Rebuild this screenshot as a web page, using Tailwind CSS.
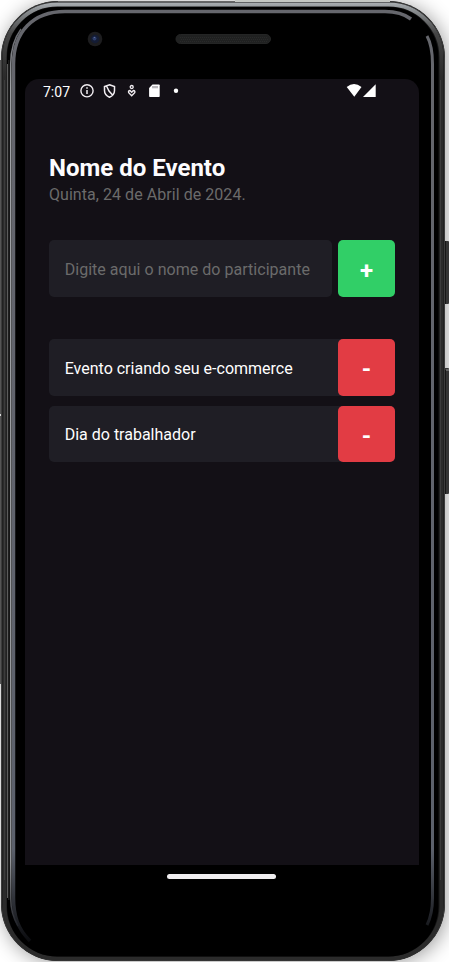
<!DOCTYPE html>
<html lang="pt-BR">
<head>
<meta charset="utf-8">
<title>Nome do Evento</title>
<script src="https://cdn.jsdelivr.net/npm/@tailwindcss/browser@4"></script>
</head>
<body class="relative w-[449px] h-[962px] overflow-hidden bg-white font-['Roboto',sans-serif]">
<!-- device frame -->
<svg class="absolute inset-0" width="449" height="962" viewBox="0 0 449 962" fill="none">
  <defs>
    <linearGradient id="rim" gradientUnits="userSpaceOnUse" x1="0" y1="0" x2="0" y2="962"><stop offset="0" stop-color="#b4b9bd"/><stop offset=".01" stop-color="#8d9194"/><stop offset=".035" stop-color="#454545"/><stop offset=".08" stop-color="#2b2b2b"/></linearGradient>
    <linearGradient id="band" gradientUnits="userSpaceOnUse" x1="0" y1="10" x2="0" y2="942"><stop offset="0" stop-color="#66676d"/><stop offset=".9" stop-color="#5c616c"/><stop offset="1" stop-color="#0a0b0e"/></linearGradient>
    <linearGradient id="edge" gradientUnits="userSpaceOnUse" x1="0" y1="15" x2="0" y2="925"><stop offset="0" stop-color="#55565c"/><stop offset=".08" stop-color="#a0a3a6"/><stop offset=".93" stop-color="#94979a"/><stop offset="1" stop-color="#22242a"/></linearGradient>
    <filter id="soft" x="-20%" y="-20%" width="140%" height="140%"><feGaussianBlur stdDeviation="10"/></filter>
  </defs>
  <rect x="4" y="4" width="442" height="958" rx="54" fill="#000" opacity=".4" filter="url(#soft)"/>
  <path d="M445 241h3q1 0 1 1v61q0 1-1 1h-3zM445 368h3q1 0 1 1v124q0 1-1 1h-3z" fill="#353535"/>
  <path d="M445.500 241v63M445.500 370v124" stroke="#171717"/>
  <path d="M446 370h3" stroke="#999"/>
  <path d="M0 60v354M0 416v268" stroke="#555" stroke-width="2"/>
  <rect x="1" y="1" width="444" height="960" rx="57" fill="#171717"/>
  <rect x="1.500" y="1.500" width="443" height="959" rx="56.500" stroke="#3c3c3c"/>
  <rect x="4.500" y="4.500" width="437" height="954" rx="53" stroke="url(#rim)" stroke-width="4"/>
  <path d="M4.500 80V880M440.500 80V880" stroke="#3c3c3c"/>
  <rect x="7" y="7" width="431.500" height="949.500" rx="50" fill="#000"/>
  <path d="M7.500 64V898" stroke="#5c5c5c"/>
  <path d="M8.800 60V900" stroke="#1f1f1f" stroke-width="1.500"/>
  <path d="M30 941C18 929 13.500 916 13.500 898V64C13.500 32 33 11.500 65 11.500H385Q401 11.500 411 19" stroke="url(#band)" stroke-width="3.500"/>
  <path d="M427 36Q432.500 46 432.500 64V898Q432.500 914 427 925" stroke="url(#band)" stroke-width="3"/>
  <path d="M18 926Q10.700 914 10.700 898V64Q10.700 43 21 29" stroke="url(#edge)" stroke-width="1.500"/>
  <path d="M58 1.500H235" stroke="#666"/><path d="M235 1H390" stroke="#c4c7c3" stroke-width="2"/>
  <circle cx="95" cy="39" r="7.300" fill="#1d1d1f"/><circle cx="95" cy="39" r="4.300" fill="#141c34"/><circle cx="94.500" cy="38.500" r="2" fill="#2c3c69"/><circle cx="94.500" cy="37.500" r=".6" fill="#66749b"/>
  <rect x="176" y="34.500" width="94.500" height="9" rx="4.500" fill="#202121" stroke="#242525"/>
  <path d="M180 37.500h87M181 39.500h87M180 41.500h87" stroke="#292a2a" stroke-dasharray="1 1"/>
</svg>

<div class="relative flex h-full flex-col items-center pt-[79px]">
  <main class="ml-[-5px] h-[786px] w-[394px] rounded-t-[14px] bg-[#131016]">
    <header class="flex h-[24px] items-center pl-[18px] text-white">
      <span class="w-[37px] pt-px text-[14px] leading-[24px]">7:07</span>
      <svg width="100" height="16" viewBox="0 0 100 16" fill="none" stroke="#f1edf1">
        <circle cx="7" cy="7.800" r="6.100" stroke-width="1.400"/><path d="M7 7v4M7 4.300v1.500" stroke-width="1.500"/>
        <path d="M29.500 1.800l5 1.800v3.900q0 4.500-5 6.700q-5-2.200-5-6.700v-3.900zM26.500 3L29 8L33 12.500" stroke-width="1.500"/>
        <circle cx="51.700" cy="4" r="1.500" stroke-width="1.300"/><path d="M51.700 12.700L48.700 9.700Q48 7.500 50 7.500L51.700 9.200L53.400 7.500Q55.400 7.500 54.700 9.700Z" stroke-width="1.400"/>
        <path d="M72.500 1.500h6.500q.7 0 .7.700v11q0 .8-.8.800h-9q-.8 0-.8-.8V5z" fill="#fff" stroke="none"/>
        <path d="M73 3v2.300M75 3v2.300M77 3v2.300" stroke="#77737a"/>
        <circle cx="96" cy="7.700" r="2.200" fill="#fff" stroke="none"/>
      </svg>
      <svg class="ml-[166px]" width="32" height="16" viewBox="0 0 32 16" fill="#fff"><path d="M.7 4Q8 -2 15.500 4L8.300 13.800zM29.700 1.300v12.700H17z"/></svg>
    </header>
    <section class="flex flex-col px-6 pt-[50px]">
      <h1 class="h-[30px] whitespace-nowrap text-[24px] leading-[31px] font-bold text-[#fdfcfe]">Nome do Evento</h1>
      <p class="h-[24px] whitespace-nowrap text-[16px] leading-[24px] tracking-[0.05px] text-[#6b6b6b]">Quinta, 24 de Abril de 2024.</p>
      <form class="mt-[33.400px] ml-[-0.300px] flex w-[346px] justify-between">
        <div class="flex h-[56.400px] w-[283px] items-center rounded-[5px] bg-[#1f1e25] pt-[3px] pl-4 text-[16px] tracking-[0.030px] whitespace-nowrap text-[#6b6b6b]">Digite aqui o nome do participante</div>
        <button type="button" class="h-[56.400px] w-[56.500px] rounded-[5px] bg-[#31cf67] pt-[4px] text-[24px] font-bold text-white">+</button>
      </form>
      <ul class="mt-[42.500px] ml-[-0.300px] flex w-[346px] flex-col gap-[9.900px]">
        <li class="flex h-[56.400px] items-center justify-between rounded-[5px] bg-[#1f1e25] pl-4 text-[16px] text-white"><span class="pt-[3.500px] whitespace-nowrap">Evento criando seu e-commerce</span><button class="h-full w-[56.500px] rounded-[5px] bg-[#e23c44] pt-[4px] text-[24px] font-bold text-white">-</button></li>
        <li class="flex h-[56.400px] items-center justify-between rounded-[5px] bg-[#1f1e25] pl-4 text-[16px] text-white"><span class="pt-[2px] whitespace-nowrap">Dia do trabalhador</span><button class="h-full w-[56.500px] rounded-[5px] bg-[#e23c44] pt-[4px] text-[24px] font-bold text-white">-</button></li>
      </ul>
    </section>
  </main>
  <div class="mt-[9.300px] ml-[-6px] h-[4.500px] w-[109px] rounded-full bg-[#f0eef0]"></div>
</div>
</body>
</html>
